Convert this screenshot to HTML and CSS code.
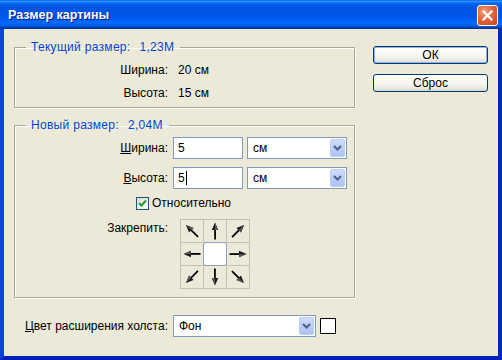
FILE: index.html
```html
<!DOCTYPE html>
<html lang="ru">
<head>
<meta charset="utf-8">
<title>Размер картины</title>
<link rel="stylesheet" href="styles.css">
</head>
<body>
<div class="window">
  <div class="titlebar">
    <span class="title">Размер картины</span>
    <div class="close"><svg width="13" height="13" viewBox="0 0 13 13"><path d="M2.5 2.5 L10.5 10.5 M10.5 2.5 L2.5 10.5" stroke="#fff" stroke-width="2.2" stroke-linecap="square"/></svg></div>
  </div>
  <div class="frame">
    <div class="main">
      <fieldset class="group g1">
        <legend>Текущий размер:<span class="gap"></span>1,23M</legend>
        <div class="info"><span class="lbl">Ширина:</span><span class="val">20 см</span></div>
        <div class="info"><span class="lbl">Высота:</span><span class="val">15 см</span></div>
      </fieldset>
      <fieldset class="group g2">
        <legend>Новый размер:<span class="gap"></span>2,04M</legend>
        <div class="ctl">
          <span class="lbl"><u>Ш</u>ирина:</span>
          <div class="field">5</div>
          <div class="select"><span>см</span><span class="drop"><svg width="9" height="6" viewBox="0 0 9 6"><path d="M1 1 L4.5 4.5 L8 1" fill="none" stroke="#4D6185" stroke-width="2"/></svg></span></div>
        </div>
        <div class="ctl">
          <span class="lbl"><u>В</u>ысота:</span>
          <div class="field">5<span class="caret"></span></div>
          <div class="select"><span>см</span><span class="drop"><svg width="9" height="6" viewBox="0 0 9 6"><path d="M1 1 L4.5 4.5 L8 1" fill="none" stroke="#4D6185" stroke-width="2"/></svg></span></div>
        </div>
        <div class="check-row">
          <span class="check"><svg width="11" height="11" viewBox="0 0 11 11"><path d="M2 5 L4.5 7.5 L9 2.5" fill="none" stroke="#21A121" stroke-width="2"/></svg></span>
          <span>Относительно</span>
        </div>
        <div class="anchor-row">
          <span class="lbl">Закрепить:</span>
          <div class="anchor">
            <svg width="0" height="0" class="defs">
              <defs>
                <symbol id="arr" viewBox="0 0 22 22">
                  <rect x="10.2" y="8" width="1.8" height="11.5" fill="#000"/>
                  <polygon points="11,2.5 7.8,10 14.2,10" fill="#1a1a1a"/>
                  <polygon points="11,2.5 11,10 14.2,10" fill="#555"/>
                </symbol>
              </defs>
            </svg>
            <span class="cell"><svg width="22" height="22" viewBox="0 0 22 22"><use href="#arr" transform="rotate(315 11 11)"/></svg></span>
            <span class="cell"><svg width="22" height="22" viewBox="0 0 22 22"><use href="#arr"/></svg></span>
            <span class="cell"><svg width="22" height="22" viewBox="0 0 22 22"><use href="#arr" transform="rotate(45 11 11)"/></svg></span>
            <span class="cell"><svg width="22" height="22" viewBox="0 0 22 22"><use href="#arr" transform="rotate(270 11 11)"/></svg></span>
            <span class="cell center"></span>
            <span class="cell"><svg width="22" height="22" viewBox="0 0 22 22"><use href="#arr" transform="rotate(90 11 11)"/></svg></span>
            <span class="cell"><svg width="22" height="22" viewBox="0 0 22 22"><use href="#arr" transform="rotate(225 11 11)"/></svg></span>
            <span class="cell"><svg width="22" height="22" viewBox="0 0 22 22"><use href="#arr" transform="rotate(180 11 11)"/></svg></span>
            <span class="cell"><svg width="22" height="22" viewBox="0 0 22 22"><use href="#arr" transform="rotate(135 11 11)"/></svg></span>
          </div>
        </div>
      </fieldset>
      <div class="canvas-row">
        <span class="lbl"><u>Ц</u>вет расширения холста:</span>
        <div class="select wide"><span>Фон</span><span class="drop"><svg width="9" height="6" viewBox="0 0 9 6"><path d="M1 1 L4.5 4.5 L8 1" fill="none" stroke="#4D6185" stroke-width="2"/></svg></span></div>
        <span class="swatch"></span>
      </div>
    </div>
    <div class="side">
      <div class="btn default">ОК</div>
      <div class="btn">Сброс</div>
    </div>
  </div>
</div>
</body>
</html>
```

FILE: styles.css
```css
* { box-sizing: border-box; }
html, body { margin: 0; padding: 0; }
body {
  width: 502px;
  height: 360px;
  overflow: hidden;
  font-family: "Liberation Sans", Arial, sans-serif;
  font-size: 12px;
  color: #000;
  background: #fff;
}
.window {
  width: 502px;
  height: 360px;
  display: flex;
  flex-direction: column;
}
.titlebar {
  height: 29px;
  flex: none;
  display: flex;
  align-items: center;
  justify-content: space-between;
  padding: 0 4px 0 8px;
  background: linear-gradient(to bottom, #0058EE 0%, #3593FF 4%, #288EFF 6%, #127DFF 8%, #036FFC 10%, #0262EE 14%, #0057E5 20%, #0054E3 24%, #0055EB 56%, #005BF5 66%, #026AFE 76%, #0062EF 86%, #0052D6 92%, #0040AB 94%, #003092 100%);
}
.title {
  color: #fff;
  font-weight: bold;
  font-size: 12.5px;
  text-shadow: 1px 1px 0 #0A1883;
}
.close {
  width: 21px;
  height: 21px;
  margin-top: 2px;
  border: 1px solid #fff;
  border-radius: 3px;
  background: radial-gradient(circle at 35% 30%, #F0A080 0%, #E0683F 45%, #C83E16 100%);
  display: flex;
  align-items: center;
  justify-content: center;
}
.frame {
  flex: 1;
  display: flex;
  align-items: flex-start;
  background: #ECE9D8;
  border-left: 4px solid #0843DD;
  border-right: 4px solid #0026C3;
  border-bottom: 4px solid #0022B6;
  padding: 11px 10px 0 10px;
}
.main {
  width: 341px;
  flex: none;
}
.side {
  margin-left: 18px;
  padding-top: 6px;
  display: flex;
  flex-direction: column;
  gap: 10px;
}
.group {
  margin: 0;
  padding: 0;
  min-inline-size: 0;
  border: 1px solid #ACA899;
  box-shadow: 1px 1px 0 #fff, inset 1px 1px 0 #fff;
}
.group legend {
  margin-left: 11px;
  padding: 0 6px 0 5px;
  line-height: 14px;
  color: #0046D5;
  letter-spacing: 0.3px;
}
.gap {
  display: inline-block;
  width: 9px;
}
.g1 { padding: 4px 0 3px 0; }
.g2 { margin-top: 10px; padding: 5px 0 8px 0; }
.lbl {
  width: 153px;
  flex: none;
  text-align: right;
}
.info {
  display: flex;
  align-items: center;
  height: 23px;
}
.info .val { margin-left: 10px; }
.ctl {
  display: flex;
  align-items: center;
  height: 22px;
  margin-bottom: 8px;
}
.ctl .lbl { margin-right: 5px; }
.field {
  width: 70px;
  height: 22px;
  border: 1px solid #7F9DB9;
  background: #fff;
  padding: 0 4px;
  display: flex;
  align-items: center;
  margin-right: 4px;
}
.caret {
  display: inline-block;
  width: 1px;
  height: 14px;
  background: #000;
  margin-left: 1px;
}
.select {
  width: 100px;
  height: 22px;
  border: 1px solid #7F9DB9;
  background: #fff;
  display: flex;
  align-items: center;
  justify-content: space-between;
  padding: 0 1px 0 5px;
}
.select.wide { width: 143px; }
.drop {
  width: 15px;
  height: 18px;
  border: 1px solid #B8CCF5;
  border-radius: 2px;
  background: linear-gradient(to bottom, #D0DDFC 0%, #BCCDF8 50%, #AEC3F5 100%);
  display: flex;
  align-items: center;
  justify-content: center;
}
.check-row {
  display: flex;
  align-items: center;
  gap: 3px;
  height: 14px;
  margin-top: -1px;
  padding-left: 121px;
}
.check {
  width: 13px;
  height: 13px;
  border: 1px solid #1C5180;
  background: linear-gradient(135deg, #DCDCD7, #fff);
  display: flex;
  align-items: center;
  justify-content: center;
}
.anchor-row {
  display: flex;
  align-items: flex-start;
  margin-top: 9px;
}
.anchor-row .lbl { line-height: 14px; margin-top: 2px; }
.anchor {
  margin-left: 12px;
  display: grid;
  grid-template-columns: repeat(3, 22px);
  grid-template-rows: repeat(3, 22px);
  gap: 1px;
  padding: 1px;
  background: #C4C1B0;
}
.defs { position: absolute; }
.cell {
  background: #ECE9D8;
  display: block;
  width: 22px;
  height: 22px;
}
.cell svg { display: block; }
.cell.center {
  margin: -1px;
  width: 24px;
  height: 24px;
  background: #fff;
  border: 1px solid #8FA2BA;
  border-radius: 3px;
  position: relative;
}
.canvas-row {
  margin-top: 17px;
  display: flex;
  align-items: center;
}
.canvas-row .lbl { width: 154px; margin-right: 5px; }
.swatch {
  width: 16px;
  height: 16px;
  border: 1px solid #000;
  background: #fff;
  margin-left: 4px;
}
.btn {
  width: 115px;
  height: 18px;
  border: 1px solid #003C74;
  border-radius: 3px;
  background: linear-gradient(to bottom, #FFFFFF 0%, #F5F4EF 60%, #E6E3D8 90%, #D6D0C5 100%);
  display: flex;
  align-items: center;
  justify-content: center;
}
.btn.default {
  box-shadow: inset 0 0 0 1px #8FB0EA;
}
```
